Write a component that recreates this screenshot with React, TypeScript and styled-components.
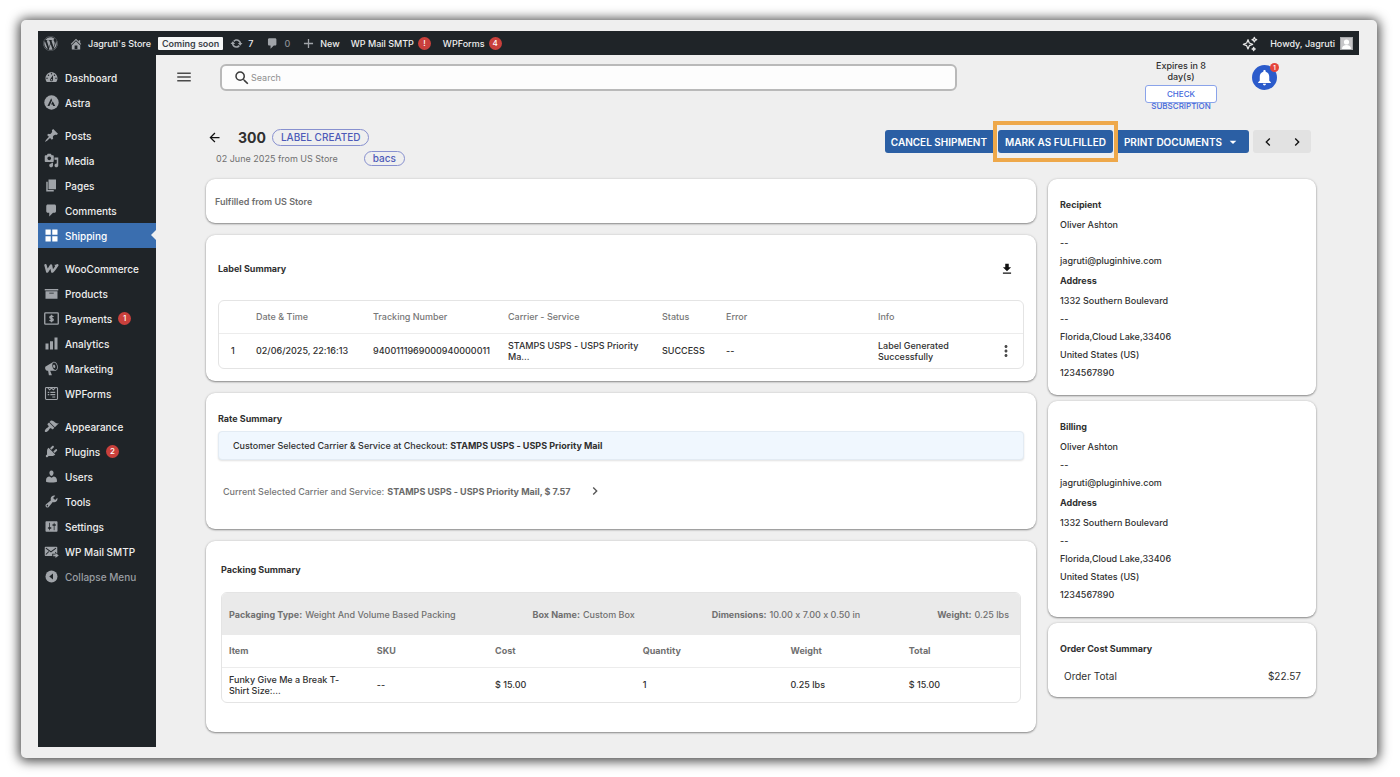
import React from "react";
import styled, { createGlobalStyle, css } from "styled-components";
import { FaWordpress } from "react-icons/fa";
import {
  MdSearch,
  MdMenu,
  MdArrowBack,
  MdNotifications,
  MdChevronLeft,
  MdChevronRight,
  MdMoreVert,
  MdArrowDropDown,
  MdDownload,
} from "react-icons/md";

const GlobalStyle = createGlobalStyle`
  *, *::before, *::after { box-sizing: border-box; }
  body {
    margin: 0;
    background: #ffffff;
    color: #303030;
    font-family: Inter, "Liberation Sans", sans-serif;
    font-size: 9px;
    line-height: 11px;
    font-feature-settings: "calt" 0;
  }
  button, input { font: inherit; color: inherit; }
  button { margin: 0; padding: 0; border: 0; background: none; cursor: pointer; }
  a { color: inherit; text-decoration: none; }
  svg { display: block; flex: none; }
  h1, h2, p, ul, dl, dd, dt { margin: 0; padding: 0; }
  ul { list-style: none; }
`;

const Frame = styled.div`
  margin: 20px 23px 19px 21px;
  padding: 11px 18px 11px 17px;
  background: #efefef;
  border-radius: 5px;
  box-shadow: 0 1px 12px 2px rgba(0, 0, 0, 0.75);
`;

/* ---------- Admin bar ---------- */

const AdminBar = styled.header`
  display: flex;
  align-items: center;
  height: 24px;
  padding: 1px 6px 0 5px;
  background: #1f2428;
  color: #eeeeee;
  font-size: 9px;
  line-height: 14px;
  font-weight: 500;
`;

const BarLink = styled.a<{ $gap?: number; $after?: number; $muted?: boolean }>`
  display: flex;
  align-items: center;
  gap: ${(p) => p.$gap ?? 6}px;
  margin-right: ${(p) => p.$after ?? 12}px;
  color: ${(p) => (p.$muted ? "#8b8f94" : "inherit")};
  svg {
    color: #a0a4a9;
  }
`;

const StoreStatus = styled.a`
  margin-right: 7px;
  padding: 0 4px;
  border-radius: 1px;
  background: #f6f7f7;
  color: #3c434a;
  font-weight: 600;
  line-height: 13px;
`;

const Count = styled.span`
  display: inline-flex;
  align-items: center;
  justify-content: center;
  width: 13px;
  height: 13px;
  border-radius: 50%;
  background: #c9403c;
  color: #ffffff;
  font-size: 8px;
  font-weight: 500;
  line-height: 13px;
`;

const Spacer = styled.div`
  flex: 1;
`;

const Avatar = styled.span`
  display: block;
  width: 13px;
  height: 13px;
  background: #c6c6c8;
  border: 1px solid #a6a8ab;
`;

/* ---------- Sidebar ---------- */

const Shell = styled.div`
  display: flex;
  align-items: stretch;
`;

const Sidebar = styled.nav`
  flex: none;
  width: 118px;
  padding-top: 10px;
  background: #1f2428;
  color: #eeeeee;
  font-size: 10px;
  line-height: 14px;
  font-weight: 500;
`;

const MenuGroup = styled.ul`
  margin-bottom: 8px;
  &:last-child {
    margin-bottom: 0;
  }
`;

const MenuLink = styled.a<{ $active?: boolean; $muted?: boolean }>`
  position: relative;
  display: flex;
  align-items: center;
  gap: 6px;
  height: 25px;
  padding-left: 6px;
  color: ${(p) => (p.$muted ? "#9a9ea3" : "inherit")};
  svg {
    color: #a0a4a9;
  }
  ${(p) =>
    p.$active &&
    css`
      background: #3a6eaf;
      color: #ffffff;
      svg {
        color: #ffffff;
      }
      &::after {
        content: "";
        position: absolute;
        right: 0;
        top: 7px;
        border: 5px solid transparent;
        border-left-width: 0;
        border-right-color: #efefef;
      }
    `}
`;

/* ---------- Content ---------- */

const Content = styled.main`
  flex: 1;
  min-width: 0;
  padding-bottom: 15px;
`;

const TopRow = styled.div`
  display: flex;
  align-items: flex-start;
  height: 66px;
  padding: 5px 82px 0 20px;
`;

const IconButton = styled.button<{ $size: number; $color?: string }>`
  display: flex;
  align-items: center;
  justify-content: center;
  flex: none;
  width: ${(p) => p.$size}px;
  height: ${(p) => p.$size}px;
  color: ${(p) => p.$color ?? "#111111"};
`;

const MenuToggle = styled(IconButton)`
  margin-top: 9px;
`;

const SearchBox = styled.label`
  display: flex;
  align-items: center;
  flex: 1;
  height: 27px;
  margin: 4px 188px 0 28px;
  padding: 0 11px;
  border: 2px solid #b9b9b9;
  border-radius: 6px;
  background: #fdfdfd;
  color: #3a3a3a;
  input {
    flex: 1;
    min-width: 0;
    padding: 0;
    border: 0;
    outline: 0;
    background: none;
  }
  input::placeholder {
    color: #8f8f8f;
    opacity: 1;
  }
`;

const Subscription = styled.div`
  width: 72px;
  margin-right: 35px;
  text-align: center;
  p {
    padding: 0 6px;
    font-weight: 500;
  }
`;

const CheckButton = styled.button`
  display: block;
  width: 100%;
  height: 18px;
  margin-top: 3px;
  padding: 2px 4px;
  border: 1px solid #8aa3ea;
  border-radius: 3px;
  background: #ffffff;
  color: #4468dc;
  font-size: 8px;
  line-height: 12px;
  font-weight: 500;
`;

const Bell = styled.button`
  position: relative;
  display: flex;
  align-items: center;
  justify-content: center;
  width: 25px;
  height: 25px;
  margin-top: 5px;
  border-radius: 50%;
  background: #2b5bcb;
  color: #ffffff;
`;

const BellCount = styled.span`
  position: absolute;
  top: -2px;
  right: -2px;
  width: 9px;
  height: 9px;
  border-radius: 50%;
  background: #e5443b;
  font-size: 6px;
  line-height: 9px;
  font-weight: 600;
`;

const OrderHeader = styled.div`
  display: flex;
  align-items: flex-start;
  justify-content: space-between;
  height: 58px;
  padding: 0 48px 0 50px;
`;

const TitleLine = styled.div`
  display: flex;
  align-items: center;
  height: 17px;
  margin-top: 8px;
  padding-left: 1px;
  h1 {
    margin: 0 6px 0 16px;
    font-size: 14px;
    line-height: 17px;
    font-weight: 700;
  }
`;

const MetaLine = styled.div`
  display: flex;
  align-items: center;
  gap: 26px;
  height: 15px;
  margin-top: 5px;
  padding-left: 10px;
  color: #707070;
`;

const Chip = styled.span<{ $small?: boolean }>`
  display: flex;
  align-items: center;
  height: ${(p) => (p.$small ? 15 : 17)}px;
  padding: 0 8px;
  border: 1px solid #8790cf;
  border-radius: 9px;
  color: #4d5ab8;
  font-size: 10px;
  font-weight: 500;
`;

const Actions = styled.div`
  display: flex;
  align-items: center;
`;

const ActionButton = styled.button<{ $side?: "left" | "right" }>`
  display: flex;
  align-items: center;
  justify-content: center;
  height: 23px;
  padding: 0 ${(p) => (p.$side ? 6 : 7)}px;
  border-radius: ${(p) =>
    p.$side === "left" ? "3px 0 0 3px" : p.$side === "right" ? "0 3px 3px 0" : "3px"};
  background: #2b5fa4;
  color: #ffffff;
  font-size: 10px;
  line-height: 14px;
  font-weight: 600;
  white-space: nowrap;
  svg {
    margin: 0 2px 0 3px;
  }
`;

const Highlight = styled.div`
  padding: 5px 1px;
  border: 4px solid #eea84a;
`;

const Pager = styled.div`
  display: flex;
  align-items: center;
  height: 23px;
  margin-left: 4px;
  border-radius: 3px;
  background: #e2e2e2;
  button {
    width: 29px;
  }
`;

const Columns = styled.div`
  display: flex;
  align-items: flex-start;
  gap: 12px;
  padding: 0 43px 0 50px;
`;

const MainColumn = styled.div`
  display: flex;
  flex-direction: column;
  flex: 1;
  min-width: 0;
  gap: 12px;
`;

const SideColumn = styled.div`
  display: flex;
  flex-direction: column;
  flex: none;
  width: 268px;
  gap: 6px;
`;

const Card = styled.section<{ $pad: string }>`
  padding: ${(p) => p.$pad};
  border-radius: 9px;
  background: #ffffff;
  box-shadow: 0 1px 2px rgba(0, 0, 0, 0.4), 0 0 3px rgba(0, 0, 0, 0.12);
`;

const Heading = styled.h2<{ $muted?: boolean }>`
  color: ${(p) => (p.$muted ? "#6f6f6f" : "#303030")};
  font-size: 9px;
  line-height: 12px;
  font-weight: ${(p) => (p.$muted ? 600 : 700)};
`;

const CardHead = styled.div`
  display: flex;
  align-items: center;
  justify-content: space-between;
  padding-right: 10px;
`;

const TableBox = styled.div<{ $top: number }>`
  margin-top: ${(p) => p.$top}px;
  border: 1px solid #e4e4e4;
  border-radius: 6px;
  overflow: hidden;
`;

const Table = styled.table`
  width: 100%;
  table-layout: fixed;
  border-collapse: collapse;
  text-align: left;
  th {
    height: 32px;
    padding: 0 7px;
    border-bottom: 1px solid #ececec;
    color: #777777;
    font-weight: 500;
  }
  td {
    height: 35px;
    padding: 0 7px;
    font-weight: 500;
  }
`;

const NumberCell = styled.td`
  && {
    padding-left: 12px;
  }
`;

const PackTable = styled(Table)`
  th {
    color: #6f6f6f;
    font-weight: 700;
  }
  td {
    padding-right: 16px;
  }
`;

const PackInfo = styled.dl`
  display: flex;
  align-items: center;
  justify-content: space-between;
  height: 42px;
  padding: 0 11px 0 7px;
  background: #eaeaea;
  color: #707070;
  div {
    display: flex;
    gap: 3px;
  }
  dt {
    font-weight: 700;
  }
  dd {
    font-weight: 500;
  }
`;

const CheckoutRate = styled.p`
  margin-top: 6px;
  padding: 8px 14px;
  border: 1px solid #e3ebf3;
  border-radius: 4px;
  background: #f0f7fe;
  box-shadow: 0 1px 2px rgba(0, 0, 0, 0.12);
  font-weight: 500;
  b {
    font-weight: 700;
  }
`;

const CurrentRate = styled.a`
  display: flex;
  align-items: center;
  gap: 3px;
  margin-top: 23px;
  padding-left: 5px;
  color: #777777;
  font-weight: 500;
  b {
    font-weight: 700;
    color: #6a6a6a;
  }
  svg {
    margin-left: 13px;
    color: #555555;
  }
`;

const AddressCard = styled(Card)`
  h2 {
    margin-bottom: 5px;
  }
  p {
    line-height: 18px;
    font-weight: 500;
  }
`;

const AddressBlock = styled.div`
  & + & {
    margin-top: 5px;
  }
`;

const CostLine = styled.dl`
  display: flex;
  justify-content: space-between;
  margin-top: 15px;
  padding-left: 4px;
  font-size: 10px;
  line-height: 12px;
`;

/* ---------- Icons ---------- */

type IconProps = { size?: number };

const glyphs: Record<string, string> = {
  home: "M16 8.5l1.53 1.53-1.06 1.06L10 4.6l-6.47 6.49-1.06-1.06L10 2.5l4 4v-2h2v4zm-6-2.46l6 5.99V18H4v-5.97zM12 17v-5H8v5h4z",
  update:
    "M10.2 3.28c3.53 0 6.43 2.61 6.92 6h2.08l-3.5 4-3.5-4h2.32c-.45-1.97-2.21-3.45-4.32-3.45-1.45 0-2.73.71-3.54 1.78L4.95 5.66C6.23 4.2 8.11 3.28 10.2 3.28zm-.4 13.44c-3.52 0-6.43-2.61-6.92-6H.8l3.5-4c1.17 1.33 2.33 2.67 3.5 4H5.48c.45 1.97 2.21 3.45 4.32 3.45 1.45 0 2.73-.71 3.54-1.78l1.71 1.95c-1.28 1.46-3.15 2.38-5.25 2.38z",
  plus: "M17 9v2h-6v6H9v-6H3V9h6V3h2v6h6z",
  dashboard:
    "M3.76 16h12.48c1.1-1.37 1.76-3.11 1.76-5 0-4.42-3.58-8-8-8s-8 3.58-8 8c0 1.89.66 3.63 1.76 5zM10 4c.55 0 1 .45 1 1s-.45 1-1 1-1-.45-1-1 .45-1 1-1zM6 6c.55 0 1 .45 1 1s-.45 1-1 1-1-.45-1-1 .45-1 1-1zm8 0c.55 0 1 .45 1 1s-.45 1-1 1-1-.45-1-1 .45-1 1-1zm-5.37 5.55L12 7v6c0 1.1-.9 2-2 2s-2-.9-2-2c0-.57.24-1.08.63-1.45zM4 10c.55 0 1 .45 1 1s-.45 1-1 1-1-.45-1-1 .45-1 1-1zm12 0c.55 0 1 .45 1 1s-.45 1-1 1-1-.45-1-1 .45-1 1-1zm-5 3c0-.55-.45-1-1-1s-1 .45-1 1 .45 1 1 1 1-.45 1-1z",
  posts:
    "M10.44 3.02l1.82-1.82 6.36 6.35-1.83 1.82c-1.05-.68-2.48-.57-3.41.36l-.75.75c-.92.93-1.04 2.35-.35 3.41l-1.83 1.82-2.41-2.41-2.8 2.79c-.42.42-3.38 2.71-3.8 2.29s1.86-3.39 2.28-3.81l2.79-2.79L4.1 9.36l1.83-1.82c1.05.69 2.48.57 3.4-.36l.75-.75c.93-.92 1.05-2.35.36-3.41z",
  media:
    "M13 11V4c0-.55-.45-1-1-1h-1.67L9 1H5L3.67 3H2c-.55 0-1 .45-1 1v7c0 .55.45 1 1 1h10c.55 0 1-.45 1-1zM7 4.5c1.38 0 2.5 1.12 2.5 2.5S8.38 9.5 7 9.5 4.5 8.38 4.5 7 5.62 4.5 7 4.5zM14 6h5v10.5c0 1.38-1.12 2.5-2.5 2.5S14 17.88 14 16.5s1.12-2.5 2.5-2.5c.17 0 .34.02.5.05V9h-3V6zm-4 8.05V13h2v3.5c0 1.38-1.12 2.5-2.5 2.5S7 17.88 7 16.5 8.12 14 9.5 14c.17 0 .34.02.5.05z",
  pages: "M6 15V2h10v13H6zm-1 1h8v2H3V5h2v11z",
  comments: "M5 2h9c1.1 0 2 .9 2 2v7c0 1.1-.9 2-2 2h-2l-5 5v-5H5c-1.1 0-2-.9-2-2V4c0-1.1.9-2 2-2z",
  shipping: "M2 2h7v7H2zM11 2h7v7h-7zM2 11h7v7H2zM11 11h7v7h-7z",
  products: "M19 4v2H1V4h18zM2 7h16v10H2V7zm11 3V9H7v1h6z",
  analytics: "M18 18V2h-4v16h4zm-6 0V7H8v11h4zm-6 0v-8H2v8h4z",
  marketing:
    "M18.15 5.94c.46 1.62.38 3.22-.02 4.48-.42 1.28-1.26 2.18-2.3 2.48-.16.06-.26.06-.4.06-.06.02-.12.02-.18.02-.06.02-.14.02-.22.02h-6.8l2.22 5.5c.02.14-.06.26-.14.34-.08.1-.24.16-.34.16H6.95c-.1 0-.26-.06-.34-.16-.08-.08-.16-.2-.14-.34l-1-5.5H4.25l-.02-.02c-.5.06-1.08-.18-1.54-.62s-.88-1.08-1.06-1.88c-.24-.8-.2-1.56-.02-2.2.18-.62.58-1.08 1.06-1.3l.02-.02 9-5.4c.1-.06.18-.1.24-.16.06-.04.14-.08.24-.12.16-.08.28-.12.5-.18 1.04-.3 2.24.1 3.22.98s1.84 2.24 2.26 3.86zm-2.58 5.98h-.02c.4-.1.74-.34 1.04-.7.58-.7.86-1.76.86-3.04 0-.64-.1-1.3-.28-1.98-.34-1.36-1.02-2.5-1.78-3.24s-1.68-1.1-2.46-.88c-.82.22-1.4.96-1.7 2-.32 1.04-.28 2.36.06 3.72.38 1.36 1 2.5 1.8 3.24.78.74 1.62 1.1 2.48.88zm-2.54-7.08c.22-.04.42-.02.62.04.38.16.76.48 1.02 1s.42 1.2.42 1.78c0 .3-.04.56-.12.8-.18.48-.44.84-.86.94-.34.1-.8-.06-1.14-.4s-.64-.86-.78-1.5c-.18-.62-.12-1.24.02-1.72s.48-.84.82-.94z",
  appearance:
    "M14.48 11.06L7.41 3.99l1.5-1.5c.5-.56 2.3-.47 3.51.32 1.21.8 1.43 1.28 2.91 2.1 1.18.64 2.45 1.26 4.45.85zm-.71.71L6.7 4.7 4.93 6.47c-.39.39-.39 1.02 0 1.41l1.06 1.06c.39.39.39 1.03 0 1.42-.6.6-1.43 1.11-2.21 1.69-.35.26-.7.53-1.01.84C1.43 14.23.4 16.08 1.4 17.07c.99 1 2.84-.03 4.18-1.36.31-.31.58-.66.85-1.02.57-.78 1.08-1.61 1.69-2.21.39-.39 1.02-.39 1.41 0l1.06 1.06c.39.39 1.02.39 1.41 0z",
  plugins:
    "M13.11 4.36L9.87 7.6 8 5.73l3.24-3.24c.35-.34 1.05-.2 1.56.32.52.51.66 1.21.31 1.55zm-8 1.77l.91-1.12 9.01 9.01-1.19.84c-.71.71-2.63 1.16-3.82 1.16H6.14L4.9 17.26c-.59.59-1.54.59-2.12 0-.59-.58-.59-1.53 0-2.12l1.24-1.24v-3.88c0-1.13.4-3.19 1.09-3.89zm7.26 3.97l3.24-3.24c.34-.35 1.04-.21 1.55.31.52.51.66 1.21.31 1.55l-3.24 3.25z",
  users:
    "M10 9.25c-2.27 0-2.73-3.44-2.73-3.44C7 4.02 7.82 2 9.97 2c2.16 0 2.98 2.02 2.71 3.81 0 0-.41 3.44-2.68 3.44zm0 2.57L12.72 10c2.39 0 4.52 2.33 4.52 4.53v2.49s-3.65 1.13-7.24 1.13c-3.65 0-7.24-1.13-7.24-1.13v-2.49c0-2.25 1.94-4.48 4.47-4.48z",
  tools:
    "M16.68 9.77c-1.34 1.34-3.3 1.67-4.95.99l-5.41 6.52c-.99.99-2.59.99-3.58 0s-.99-2.59 0-3.57l6.52-5.42c-.68-1.65-.35-3.61.99-4.95 1.28-1.28 3.12-1.62 4.72-1.06l-2.89 2.89 2.82 2.82 2.86-2.87c.53 1.58.18 3.39-1.08 4.65zM3.81 16.21c.4.39 1.04.39 1.43 0 .4-.4.4-1.04 0-1.43-.39-.4-1.03-.4-1.43 0-.39.39-.39 1.03 0 1.43z",
  settings:
    "M18 16V4c0-.55-.45-1-1-1H3c-.55 0-1 .45-1 1v12c0 .55.45 1 1 1h14c.55 0 1-.45 1-1zM8 11h1c.55 0 1 .45 1 1s-.45 1-1 1H8v1.5c0 .28-.22.5-.5.5s-.5-.22-.5-.5V13H6c-.55 0-1-.45-1-1s.45-1 1-1h1V5.5c0-.28.22-.5.5-.5s.5.22.5.5V11zm5-2h-1c-.55 0-1-.45-1-1s.45-1 1-1h1V5.5c0-.28.22-.5.5-.5s.5.22.5.5V7h1c.55 0 1 .45 1 1s-.45 1-1 1h-1v5.5c0 .28-.22.5-.5.5s-.5-.22-.5-.5V9z",
};

const Glyph = ({ name, size = 15 }: IconProps & { name: string }) => (
  <svg width={size} height={size} viewBox="0 0 20 20" fill="currentColor" aria-hidden="true">
    <path d={glyphs[name]} />
  </svg>
);

const AstraIcon = () => (
  <svg width="15" height="15" viewBox="0 0 20 20" aria-hidden="true">
    <circle cx="10" cy="10" r="9.6" fill="currentColor" />
    <path d="M9.6 4.2 4.6 14.6h2.6L10.8 7zM11.6 8.4 9.4 12.8h2l.8 1.8h2.8z" fill="#1f2428" />
  </svg>
);

const WooIcon = () => (
  <svg width="15" height="15" viewBox="0 0 20 20" aria-hidden="true">
    <path
      d="M2 5.600 4.300 14.200 9.400 6 11 14.200C12.800 13 15 10 17.800 5.600"
      fill="none"
      stroke="currentColor"
      strokeWidth="3.200"
      strokeLinecap="round"
      strokeLinejoin="round"
    />
    <path d="M14 5h4.500l-3 5z" fill="currentColor" />
  </svg>
);

const PaymentsIcon = () => (
  <svg width="15" height="15" viewBox="0 0 20 20" fill="none" stroke="currentColor" aria-hidden="true">
    <rect x="1" y="2.500" width="18" height="15" rx="1" strokeWidth="1.800" />
    <path
      d="M12.500 7.900C12 7.100 11 6.900 10 6.900c-1.300 0-2.200.5-2.200 1.500 0 2.200 4.500 1 4.500 3.200 0 1-1 1.500-2.300 1.500-1.100 0-2-.3-2.500-1.100M10 5v10"
      strokeWidth="1.900"
    />
  </svg>
);

const FormsIcon = () => (
  <svg width="15" height="15" viewBox="0 0 20 20" fill="none" stroke="currentColor" aria-hidden="true">
    <rect x="2" y="2" width="16" height="16" rx="1.200" strokeWidth="1.500" />
    <path
      d="M5 2.500 7.500 5 10 2.800 12.500 5 15 2.500M5 8.500h2M8.500 8.500H15M5 11.500h2M8.500 11.500H15M11 14.700h4"
      strokeWidth="1.400"
    />
  </svg>
);

const MailIcon = () => (
  <svg width="15" height="15" viewBox="0 0 20 20" aria-hidden="true">
    <path
      d="M2 3.500h14.500q1.200 0 1.200 1.200v7.800l-3-2.200v2.700H11V16H2.200Q1 16 1 14.800V4.700Q1 3.500 2 3.500z"
      fill="currentColor"
    />
    <path d="M2.500 5.500 9.300 10.500 16 5.500M2.500 14l4-4" fill="none" stroke="#1f2428" strokeWidth="1.400" />
    <path d="M12.300 14h3v-2.300l4.400 3.500-4.400 3.500v-2.300h-3z" fill="currentColor" />
  </svg>
);

const CollapseIcon = () => (
  <svg width="15" height="15" viewBox="0 0 20 20" aria-hidden="true">
    <circle cx="10" cy="10" r="8" fill="currentColor" />
    <path d="M12 6v8l-5-4z" fill="#1f2428" />
  </svg>
);

const SparkIcon = () => (
  <svg
    width="16"
    height="16"
    viewBox="0 0 24 24"
    fill="none"
    stroke="#e6e6e6"
    strokeWidth="1.800"
    strokeLinejoin="round"
    aria-hidden="true"
  >
    <path d="M9 5.500 11 10.500 16 12.500 11 14.500 9 19.500 7 14.500 2 12.500 7 10.500z" />
    <path d="M18.500 2 19.600 4.400 22 5.500 19.600 6.600 18.500 9 17.400 6.600 15 5.500 17.400 4.400z" />
    <path d="M17.500 17 18.300 18.700 20 19.500 18.300 20.300 17.500 22 16.700 20.300 15 19.500 16.700 18.700z" />
  </svg>
);

const PersonIcon = () => (
  <svg width="11" height="11" viewBox="0 0 11 11" fill="#ffffff" aria-hidden="true">
    <circle cx="5.500" cy="4" r="2.600" />
    <path d="M1 11c0-3 2-4 4.500-4s4.500 1 4.500 4z" />
  </svg>
);

/* ---------- Data ---------- */

type MenuEntry = {
  label: string;
  icon: React.ReactNode;
  count?: number;
  active?: boolean;
  muted?: boolean;
};

const menu: MenuEntry[][] = [
  [
    { label: "Dashboard", icon: <Glyph name="dashboard" /> },
    { label: "Astra", icon: <AstraIcon /> },
  ],
  [
    { label: "Posts", icon: <Glyph name="posts" /> },
    { label: "Media", icon: <Glyph name="media" /> },
    { label: "Pages", icon: <Glyph name="pages" /> },
    { label: "Comments", icon: <Glyph name="comments" /> },
    { label: "Shipping", icon: <Glyph name="shipping" />, active: true },
  ],
  [
    { label: "WooCommerce", icon: <WooIcon /> },
    { label: "Products", icon: <Glyph name="products" /> },
    { label: "Payments", icon: <PaymentsIcon />, count: 1 },
    { label: "Analytics", icon: <Glyph name="analytics" /> },
    { label: "Marketing", icon: <Glyph name="marketing" /> },
    { label: "WPForms", icon: <FormsIcon /> },
  ],
  [
    { label: "Appearance", icon: <Glyph name="appearance" /> },
    { label: "Plugins", icon: <Glyph name="plugins" />, count: 2 },
    { label: "Users", icon: <Glyph name="users" /> },
    { label: "Tools", icon: <Glyph name="tools" /> },
    { label: "Settings", icon: <Glyph name="settings" /> },
    { label: "WP Mail SMTP", icon: <MailIcon /> },
    { label: "Collapse Menu", icon: <CollapseIcon />, muted: true },
  ],
];

const contact = ["Oliver Ashton", "--", "jagruti@pluginhive.com"];
const address = [
  "1332 Southern Boulevard",
  "--",
  "Florida,Cloud Lake,33406",
  "United States (US)",
  "1234567890",
];

const packing = [
  ["Packaging Type:", "Weight And Volume Based Packing"],
  ["Box Name:", "Custom Box"],
  ["Dimensions:", "10.00 x 7.00 x 0.50 in"],
  ["Weight:", "0.25 lbs"],
];

const packColumns = [
  { label: "Item", share: 5, value: "Funky Give Me a Break T-Shirt Size:..." },
  { label: "SKU", share: 4, value: "--" },
  { label: "Cost", share: 5, value: "$ 15.00" },
  { label: "Quantity", share: 5, value: "1" },
  { label: "Weight", share: 4, value: "0.25 lbs" },
  { label: "Total", share: 4, value: "$ 15.00" },
];
const packShares = packColumns.reduce((sum, c) => sum + c.share, 0);

const PartyCard = ({ title }: { title: string }) => (
  <AddressCard $pad="20px 12px 13px">
    <AddressBlock>
      <Heading>{title}</Heading>
      {contact.map((line) => (
        <p key={line}>{line}</p>
      ))}
    </AddressBlock>
    <AddressBlock>
      <Heading>Address</Heading>
      {address.map((line) => (
        <p key={line}>{line}</p>
      ))}
    </AddressBlock>
  </AddressCard>
);

export default function App() {
  return (
    <>
      <GlobalStyle />
      <Frame>
        <AdminBar>
          <BarLink href="#" aria-label="About WordPress" $after={11}>
            <FaWordpress size={15} />
          </BarLink>
          <BarLink href="#" $after={7} $gap={5}>
            <Glyph name="home" size={14} /> Jagruti's Store
          </BarLink>
          <StoreStatus href="#">Coming soon</StoreStatus>
          <BarLink href="#" $gap={5}>
            <Glyph name="update" size={13} /> 7
          </BarLink>
          <BarLink href="#" $muted>
            <Glyph name="comments" size={13} /> 0
          </BarLink>
          <BarLink href="#" $after={11} $gap={5}>
            <Glyph name="plus" size={13} /> New
          </BarLink>
          <BarLink href="#" $gap={4}>
            WP Mail SMTP <Count>!</Count>
          </BarLink>
          <BarLink href="#" $gap={4}>
            WPForms <Count>4</Count>
          </BarLink>
          <Spacer />
          <BarLink href="#" aria-label="Assistant">
            <SparkIcon />
          </BarLink>
          <BarLink href="#" $after={0} $gap={5}>
            Howdy, Jagruti
            <Avatar>
              <PersonIcon />
            </Avatar>
          </BarLink>
        </AdminBar>

        <Shell>
          <Sidebar aria-label="Admin menu">
            {menu.map((group) => (
              <MenuGroup key={group[0].label}>
                {group.map((item) => (
                  <li key={item.label}>
                    <MenuLink href="#" $active={item.active} $muted={item.muted}>
                      {item.icon}
                      {item.label}
                      {item.count && <Count>{item.count}</Count>}
                    </MenuLink>
                  </li>
                ))}
              </MenuGroup>
            ))}
          </Sidebar>

          <Content>
            <TopRow>
              <MenuToggle $size={16} $color="#4a4a4a" aria-label="Menu">
                <MdMenu size={18} />
              </MenuToggle>
              <SearchBox>
                <MdSearch size={18} />
                <input type="search" placeholder="Search" aria-label="Search" />
              </SearchBox>
              <Subscription>
                <p>Expires in 8 day(s)</p>
                <CheckButton>CHECK SUBSCRIPTION</CheckButton>
              </Subscription>
              <Bell aria-label="Notifications">
                <MdNotifications size={19} />
                <BellCount>1</BellCount>
              </Bell>
            </TopRow>

            <OrderHeader>
              <div>
                <TitleLine>
                  <IconButton $size={15} aria-label="Back">
                    <MdArrowBack size={15} />
                  </IconButton>
                  <h1>300</h1>
                  <Chip>LABEL CREATED</Chip>
                </TitleLine>
                <MetaLine>
                  02 June 2025 from US Store
                  <Chip $small>bacs</Chip>
                </MetaLine>
              </div>
              <Actions>
                <ActionButton $side="left">CANCEL SHIPMENT</ActionButton>
                <Highlight>
                  <ActionButton>MARK AS FULFILLED</ActionButton>
                </Highlight>
                <ActionButton $side="right">
                  PRINT DOCUMENTS <MdArrowDropDown size={16} />
                </ActionButton>
                <Pager>
                  <IconButton $size={23} aria-label="Previous order">
                    <MdChevronLeft size={16} />
                  </IconButton>
                  <IconButton $size={23} aria-label="Next order">
                    <MdChevronRight size={16} />
                  </IconButton>
                </Pager>
              </Actions>
            </OrderHeader>

            <Columns>
              <MainColumn>
                <Card $pad="17px 9px 15px">
                  <Heading $muted>Fulfilled from US Store</Heading>
                </Card>

                <Card $pad="27px 12px 12px">
                  <CardHead>
                    <Heading>Label Summary</Heading>
                    <IconButton $size={14} aria-label="Download labels">
                      <MdDownload size={14} />
                    </IconButton>
                  </CardHead>
                  <TableBox $top={24}>
                    <Table>
                      <colgroup>
                        <col width="30" />
                        <col width="117" />
                        <col width="135" />
                        <col width="154" />
                        <col width="64" />
                        <col />
                        <col width="118" />
                        <col width="34" />
                      </colgroup>
                      <thead>
                        <tr>
                          <th aria-label="Number" />
                          <th>Date &amp; Time</th>
                          <th>Tracking Number</th>
                          <th>Carrier - Service</th>
                          <th>Status</th>
                          <th>Error</th>
                          <th>Info</th>
                          <th aria-label="Actions" />
                        </tr>
                      </thead>
                      <tbody>
                        <tr>
                          <NumberCell>1</NumberCell>
                          <td>02/06/2025, 22:16:13</td>
                          <td>9400111969000940000011</td>
                          <td>STAMPS USPS - USPS Priority Ma...</td>
                          <td>SUCCESS</td>
                          <td>--</td>
                          <td>Label Generated Successfully</td>
                          <td>
                            <IconButton $size={20} $color="#4a4a4a" aria-label="More">
                              <MdMoreVert size={18} />
                            </IconButton>
                          </td>
                        </tr>
                      </tbody>
                    </Table>
                  </TableBox>
                </Card>

                <Card $pad="20px 12px 30px">
                  <Heading>Rate Summary</Heading>
                  <CheckoutRate>
                    Customer Selected Carrier &amp; Service at Checkout:{" "}
                    <b>STAMPS USPS - USPS Priority Mail</b>
                  </CheckoutRate>
                  <CurrentRate href="#">
                    Current Selected Carrier and Service:{" "}
                    <b>STAMPS USPS - USPS Priority Mail, $ 7.57</b>
                    <MdChevronRight size={16} />
                  </CurrentRate>
                </Card>

                <Card $pad="23px 15px 29px">
                  <Heading>Packing Summary</Heading>
                  <TableBox $top={16}>
                    <PackInfo>
                      {packing.map(([name, value]) => (
                        <div key={name}>
                          <dt>{name}</dt>
                          <dd>{value}</dd>
                        </div>
                      ))}
                    </PackInfo>
                    <PackTable>
                      <colgroup>
                        {packColumns.map((c) => (
                          <col key={c.label} style={{ width: `${(c.share / packShares) * 100}%` }} />
                        ))}
                      </colgroup>
                      <thead>
                        <tr>
                          {packColumns.map((c) => (
                            <th key={c.label}>{c.label}</th>
                          ))}
                        </tr>
                      </thead>
                      <tbody>
                        <tr>
                          {packColumns.map((c) => (
                            <td key={c.label}>{c.value}</td>
                          ))}
                        </tr>
                      </tbody>
                    </PackTable>
                  </TableBox>
                </Card>
              </MainColumn>

              <SideColumn>
                <PartyCard title="Recipient" />
                <PartyCard title="Billing" />
                <Card $pad="20px 15px 15px 12px">
                  <Heading>Order Cost Summary</Heading>
                  <CostLine>
                    <dt>Order Total</dt>
                    <dd>$22.57</dd>
                  </CostLine>
                </Card>
              </SideColumn>
            </Columns>
          </Content>
        </Shell>
      </Frame>
    </>
  );
}
